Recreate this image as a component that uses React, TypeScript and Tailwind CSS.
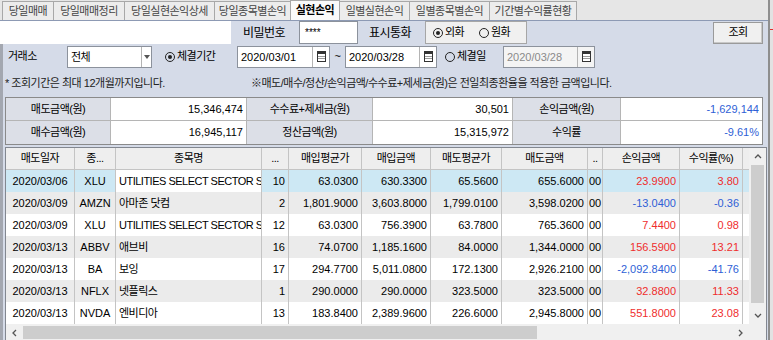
import React from "react";

type Row = {
  date: string;
  code: string;
  name: string;
  qty: string;
  buyAvg: string;
  buyAmt: string;
  sellAvg: string;
  sellAmt: string;
  pl: string;
  rate: string;
};

const rows: Row[] = [
  { date: "2020/03/06", code: "XLU", name: "UTILITIES SELECT SECTOR S", qty: "10", buyAvg: "63.0300", buyAmt: "630.3300", sellAvg: "65.5600", sellAmt: "655.6000", pl: "23.9900", rate: "3.80" },
  { date: "2020/03/09", code: "AMZN", name: "아마존 닷컴", qty: "2", buyAvg: "1,801.9000", buyAmt: "3,603.8000", sellAvg: "1,799.0100", sellAmt: "3,598.0200", pl: "-13.0400", rate: "-0.36" },
  { date: "2020/03/09", code: "XLU", name: "UTILITIES SELECT SECTOR S", qty: "12", buyAvg: "63.0300", buyAmt: "756.3900", sellAvg: "63.7800", sellAmt: "765.3600", pl: "7.4400", rate: "0.98" },
  { date: "2020/03/13", code: "ABBV", name: "애브비", qty: "16", buyAvg: "74.0700", buyAmt: "1,185.1600", sellAvg: "84.0000", sellAmt: "1,344.0000", pl: "156.5900", rate: "13.21" },
  { date: "2020/03/13", code: "BA", name: "보잉", qty: "17", buyAvg: "294.7700", buyAmt: "5,011.0800", sellAvg: "172.1300", sellAmt: "2,926.2100", pl: "-2,092.8400", rate: "-41.76" },
  { date: "2020/03/13", code: "NFLX", name: "넷플릭스", qty: "1", buyAvg: "290.0000", buyAmt: "290.0000", sellAvg: "323.5000", sellAmt: "323.5000", pl: "32.8800", rate: "11.33" },
  { date: "2020/03/13", code: "NVDA", name: "엔비디아", qty: "13", buyAvg: "183.8400", buyAmt: "2,389.9600", sellAvg: "226.6000", sellAmt: "2,945.8000", pl: "551.8000", rate: "23.08" },
];

const tabs = [
  { label: "당일매매", w: "w-[52px]" },
  { label: "당일매매정리", w: "w-[72px]" },
  { label: "당일실현손익상세", w: "w-[91px]" },
  { label: "당일종목별손익", w: "w-[77px]" },
  { label: "실현손익", w: "w-[50px]", active: true },
  { label: "일별실현손익", w: "w-[71px]" },
  { label: "일별종목별손익", w: "w-[81px]" },
  { label: "기간별수익률현황", w: "w-[88px]" },
];

const Radio = ({ on }: { on?: boolean }) => (
  <span className="inline-flex w-[10px] h-[10px] rounded-full border border-[#222] items-center justify-center mr-[2px] shrink-0">
    {on && <span className="w-[4px] h-[4px] rounded-full bg-[#222]" />}
  </span>
);

const Calendar = () => (
  <svg width="9" height="11" viewBox="0 0 9 11">
    <rect x="0.5" y="0.5" width="8" height="10" fill="#fff" stroke="#333" />
    <rect x="1" y="1" width="7" height="2" fill="#333" />
    <line x1="1" y1="5.5" x2="8" y2="5.5" stroke="#999" />
    <line x1="1" y1="7.5" x2="8" y2="7.5" stroke="#999" />
  </svg>
);

const DateBox = ({ value, disabled, w }: { value: string; disabled?: boolean; w: string }) => (
  <div className={`${w} h-[22px] flex border border-[#8c929c] ${disabled ? "bg-[#f4f4f4]" : "bg-white"}`}>
    <span className={`flex-1 pl-[3px] leading-[20px] tracking-normal ${disabled ? "text-[#8a8a8a]" : "text-black"}`}>{value}</span>
    <span className="w-[17px] flex items-center justify-center border-l border-[#b4b4b4]">
      <Calendar />
    </span>
  </div>
);

const Chevron = ({ dir }: { dir: "up" | "down" | "left" | "right" }) => {
  const pts = {
    up: "1,5 4,2 7,5",
    down: "1,2 4,5 7,2",
    left: "5,1 2,4 5,7",
    right: "2,1 5,4 2,7",
  }[dir];
  return (
    <svg width="8" height="8" viewBox="0 0 8 8">
      <polyline points={pts} fill="none" stroke="#555" strokeWidth="1.3" />
    </svg>
  );
};

const cols = [
  { key: "date", label: "매도일자", w: "w-[69px]", align: "text-center", num: true },
  { key: "code", label: "종...", w: "w-[41px]", align: "text-center", num: true },
  { key: "name", label: "종목명", w: "w-[146px]", align: "text-left", num: false },
  { key: "qty", label: "...", w: "w-[27px]", align: "text-right", num: true },
  { key: "buyAvg", label: "매입평균가", w: "w-[73px]", align: "text-right", num: true },
  { key: "buyAmt", label: "매입금액", w: "w-[69px]", align: "text-right", num: true },
  { key: "sellAvg", label: "매도평균가", w: "w-[71px]", align: "text-right", num: true },
  { key: "sellAmt", label: "매도금액", w: "w-[86px]", align: "text-right", num: true },
  { key: "ex", label: "..", w: "w-[15px]", align: "text-left", num: true },
  { key: "pl", label: "손익금액", w: "w-[77px]", align: "text-right", num: true },
  { key: "rate", label: "수익률(%)", w: "w-[63px]", align: "text-right", num: true },
] as const;

export default function App() {
  return (
    <div className="w-[773px] h-[340px] overflow-hidden flex bg-[#d5dbe8] font-['Liberation_Sans','Noto_Sans_CJK_KR',sans-serif] text-[11px] tracking-[-0.5px] text-black">
      <div className="w-[768px] flex flex-col">
        <div className="h-[2px] bg-[#3d4760]" />
        {/* tabs */}
        <div className="h-[21px] flex items-end pl-[2px] bg-[#e6e6e6] border-b border-[#8d9ab4]">
          {tabs.map((t) => (
            <div
              key={t.label}
              className={`${t.w} ${
                t.active ? "h-[20px] bg-[#fafafa] font-bold text-black" : "h-[19px] bg-[#ececec] text-[#444]"
              } flex items-center justify-center border border-b-0 border-[#a8a8a8] -mr-px`}
            >
              {t.label}
            </div>
          ))}
        </div>
        {/* password row */}
        <div className="h-[24px] flex items-center">
          <div className="w-[231px] h-full bg-white" />
          <span className="ml-[12px] w-[56px] text-[12px]">비밀번호</span>
          <div className="w-[59px] h-[23px] bg-white border border-[#8c929c] pl-[5px] leading-[21px] text-[10px] tracking-normal">
            ****
          </div>
          <span className="ml-[11px] w-[56px] text-[12px]">표시통화</span>
          <div className="w-[102px] h-[23px] bg-[#f0f0f0] border border-[#a6a6a6] flex items-center pl-[7px]">
            <Radio on />
            <span className="w-[34px]">외화</span>
            <Radio />
            <span>원화</span>
          </div>
          <div className="ml-auto mr-[5px] w-[50px] h-[22px] bg-[#f0f0f0] border border-[#9a9a9a] shadow-[inset_-1px_-1px_0_#c8c8c8] flex items-center justify-center">
            조회
          </div>
        </div>
        {/* left strip body */}
        <div className="flex-1 flex flex-col border-l-[3px] border-[#a3a7b0]">
          <div className="h-[25px] flex items-center">
            <span className="ml-[5px] w-[59px]">거래소</span>
            <div className="w-[85px] h-[22px] flex bg-white border border-[#8c929c]">
              <span className="flex-1 pl-[3px] leading-[20px]">전체</span>
              <span className="w-[10px] flex items-center justify-center border-l border-[#b4b4b4]">
                <svg width="6" height="4" viewBox="0 0 6 4">
                  <polygon points="0,0 6,0 3,4" fill="#555" />
                </svg>
              </span>
            </div>
            <span className="ml-[13px] w-[72px] flex items-center">
              <Radio on />
              체결기간
            </span>
            <DateBox w="w-[93px]" value="2020/03/01" />
            <span className="w-[15px] text-center">~</span>
            <DateBox w="w-[92px]" value="2020/03/28" />
            <span className="ml-[8px] w-[58px] flex items-center">
              <Radio />
              체결일
            </span>
            <DateBox w="w-[92px]" value="2020/03/28" disabled />
          </div>
          <div className="h-[28px] flex items-center text-[#222]">
            <span className="ml-[2px] w-[246px]">* 조회기간은 최대 12개월까지입니다.</span>
            <span>※매도/매수/정산/손익금액/수수료+제세금(원)은 전일최종환율을 적용한 금액입니다.</span>
          </div>
          {/* summary */}
          <div className="ml-[2px] w-[758px] border border-[#8a8a8a] bg-white">
            {[
              ["매도금액(원)", "15,346,474", "수수료+제세금(원)", "30,501", "손익금액(원)", "-1,629,144"],
              ["매수금액(원)", "16,945,117", "정산금액(원)", "15,315,972", "수익률", "-9.61%"],
            ].map((r, i) => (
              <div key={i} className={`h-[23px] flex ${i === 0 ? "border-b border-[#b5b5b5]" : ""}`}>
                <div className="w-[105px] bg-[#dcdfe7] border-r border-[#b5b5b5] flex items-center justify-center">{r[0]}</div>
                <div className="w-[136px] border-r border-[#b5b5b5] flex items-center justify-end pr-[3px] tracking-normal">{r[1]}</div>
                <div className="w-[126px] bg-[#dcdfe7] border-r border-[#b5b5b5] flex items-center justify-center">{r[2]}</div>
                <div className="w-[140px] border-r border-[#b5b5b5] flex items-center justify-end pr-[3px] tracking-normal">{r[3]}</div>
                <div className="w-[108px] bg-[#dcdfe7] border-r border-[#b5b5b5] flex items-center justify-center">{r[4]}</div>
                <div className="flex-1 flex items-center justify-end pr-[3px] text-[#2f5fd6] tracking-normal">{r[5]}</div>
              </div>
            ))}
          </div>
          {/* grid */}
          <div className="mt-[2px] ml-[2px] w-[762px] h-[200px] border border-[#828790] bg-white flex">
            <div className="flex-1 flex flex-col">
              <div className="h-[22px] flex bg-[#eeeeee] border-b border-[#c4c4c4]">
                {cols.map((c) => (
                  <div key={c.key} className={`${c.w} border-r border-[#c4c4c4] flex items-center justify-center whitespace-nowrap overflow-hidden`}>
                    {c.label}
                  </div>
                ))}
              </div>
              {rows.map((r, i) => {
                const neg = r.pl.startsWith("-");
                const bg = i === 0 ? "bg-[#cde8f4]" : i % 2 === 1 ? "bg-[#ebebeb]" : "bg-white";
                return (
                  <div key={i} className={`h-[22px] flex ${bg}`}>
                    {cols.map((c) => {
                      const val = c.key === "ex" ? "00" : (r as any)[c.key];
                      const color = c.key === "pl" || c.key === "rate" ? (neg ? "text-[#2f5fd6]" : "text-[#ef2d2d]") : "";
                      const cellBg = i === 0 && c.key === "name" ? "bg-white" : "";
                      return (
                        <div
                          key={c.key}
                          className={`${c.w} ${c.align} ${color} ${cellBg} ${c.num ? "tracking-normal" : ""} border-r border-[#c4c4c4] ${c.key === "ex" ? "px-[1px]" : "px-[3px]"} leading-[22px] whitespace-nowrap overflow-hidden`}
                        >
                          {val}
                        </div>
                      );
                    })}
                  </div>
                );
              })}
              <div className="h-[17px] flex bg-[#f0f0f0]">
                <span className="w-[17px] flex items-center justify-center">
                  <Chevron dir="left" />
                </span>
                <span className="w-[514px] my-[2px] bg-[#cdcdcd]" />
                <span className="flex-1" />
                <span className="w-[17px] flex items-center justify-center">
                  <Chevron dir="right" />
                </span>
              </div>
            </div>
            <div className="w-[17px] flex flex-col bg-[#f0f0f0]">
              <span className="h-[17px] flex items-center justify-center">
                <Chevron dir="up" />
              </span>
              <span className="h-[138px] mx-[2px] bg-[#cdcdcd]" />
              <span className="h-[4px]" />
              <span className="h-[17px] flex items-center justify-center">
                <Chevron dir="down" />
              </span>
            </div>
          </div>
        </div>
      </div>
      <div className="flex-1 border-l-2 border-[#8e8e8e] bg-[#e2e2e2] flex flex-col">
        <div className="h-[29px]" />
        <div className="h-px bg-[#e03030]" />
      </div>
    </div>
  );
}
